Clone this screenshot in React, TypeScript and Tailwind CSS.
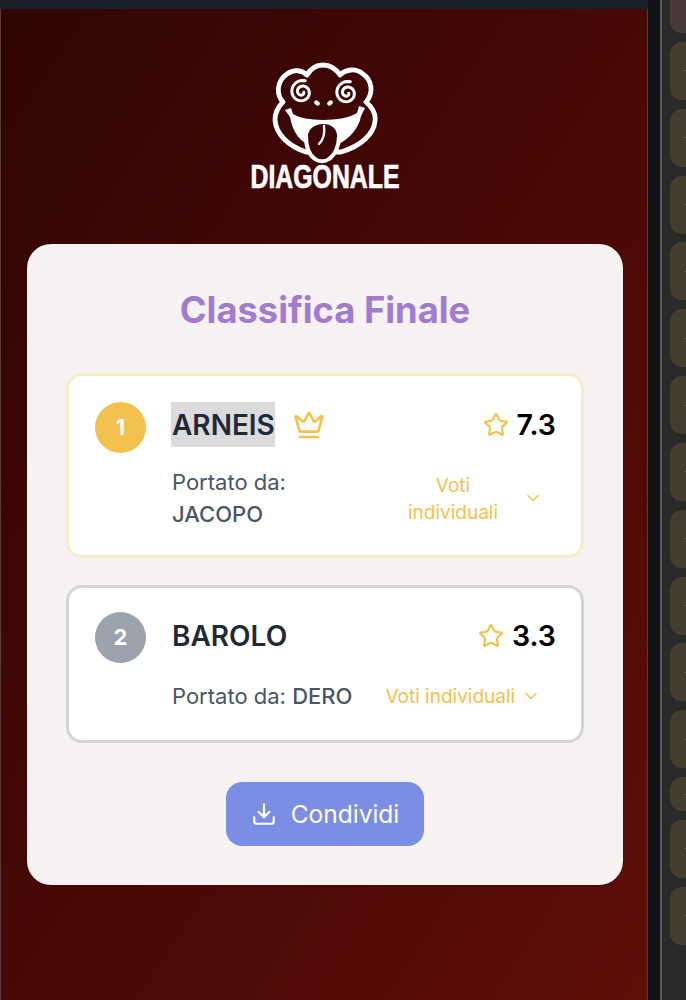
import React from 'react';
import { ChevronDown, Crown, Download, Star } from 'lucide-react';

// spirale degli occhi, calcolata come polilinea
const spiral = (cx: number, cy: number) => {
  const pts: string[] = [];
  for (let t = 0; t <= 1; t += 0.02) {
    const a = t * Math.PI * 3.6 + 0.2;
    const r = 1.8 + t * 10.2;
    pts.push(`${(cx + Math.cos(a) * r).toFixed(2)},${(cy + Math.sin(a) * r).toFixed(2)}`);
  }
  return pts.join(' ');
};

const Logo = () => (
  <svg width="106" height="104" viewBox="0 0 106 104" fill="none" className="block">
    {/* testa */}
    <path
      d="M35 13C39 6 45 3 51 3C58 3 64 7 68 13C74 7 84 6 91 12C100 18 102 31 94 40C101 46 104 52 103 59C102 72 89 84 69 90L34 90C16 84 4 72 3 58C3 52 5 46 11 40C3 31 6 18 15 12C22 7 30 8 35 13Z"
      stroke="white"
      strokeWidth="4.8"
      strokeLinejoin="round"
    />
    {/* occhi */}
    <polyline points={spiral(30, 30)} stroke="white" strokeWidth="3" strokeLinecap="round" />
    <polyline points={spiral(75, 31)} stroke="white" strokeWidth="3" strokeLinecap="round" />
    {/* naso */}
    <ellipse cx="45" cy="41" rx="3" ry="2.2" fill="white" transform="rotate(35 45 41)" />
    <ellipse cx="58" cy="41" rx="3" ry="2.2" fill="white" transform="rotate(-35 58 41)" />
    {/* bocca */}
    <path
      d="M13 48L19 46L21 52C32 60 72 60 85 51L87 44L93 46L89 54C87 66 78 76 67 82L35 82C25 77 20 66 18 55Z"
      fill="white"
    />
    {/* lingua */}
    <path
      d="M34 74C34 66 42 60 51 60C61 60 67 66 67 74C67 84 63 93 57 97C53 100 47 100 43 97C37 93 34 84 34 74Z"
      fill="#3b0805"
      stroke="white"
      strokeWidth="4"
    />
    <path d="M52 64C53 71 51 78 47 82" stroke="white" strokeWidth="2.4" strokeLinecap="round" />
  </svg>
);

// altezze delle righe nel pannello laterale
const tiles = [58, 58, 58, 58, 58, 58, 58, 58, 58, 58, 58, 34, 58, 58];

const App = () => {
  return (
    <div className="flex h-[1000px] w-[686px] overflow-hidden bg-[#111317] font-['Inter',sans-serif]">
      {/* colonna principale */}
      <div className="flex w-[648px] flex-col">
        <div className="h-[9px] shrink-0 bg-[#1a202a]" />
        <div className="flex flex-1 flex-col items-center border-x border-[#5a3a3a] bg-gradient-to-br from-[#300504] to-[#5f0e09] pr-[24px] pl-[26px]">
          <div className="mt-[53px] flex flex-col items-center">
            <Logo />
            <div className="mt-[-7px] scale-x-[0.73] font-['Liberation_Sans',sans-serif] text-[34px] leading-[34px] font-bold text-white [-webkit-text-stroke:0.7px_white]">
              DIAGONALE
            </div>
          </div>

          <div className="mt-[51px] flex h-[641px] w-[596px] flex-col items-center rounded-3xl bg-[#f5f2f1] px-[39px] shadow-sm">
            <h1 className="mt-[44px] text-[36.3px] leading-[44px] font-bold text-[#a07bd0]">
              Classifica Finale
            </h1>

            <div className="mt-[41px] flex h-[185px] w-full flex-col rounded-2xl border-[3px] border-[#f9ecc9] bg-white pt-[26px] pr-[25px] pl-[26px]">
              <div className="flex items-start">
                <div className="flex h-[51px] w-[51px] shrink-0 items-center justify-center rounded-full bg-[#f2c14e] text-[22px] font-bold text-white">
                  1
                </div>
                <div className="ml-[25px] flex h-[45px] items-center bg-[#dbdbdb] pl-px text-[28px] font-semibold text-[#1f2937]">
                  ARNEIS
                </div>
                <Crown size={32} strokeWidth={2} className="mt-[7px] ml-[18px] text-[#f2c14e]" />
                <div className="mt-[7px] ml-auto flex items-center gap-2">
                  <Star size={26} strokeWidth={2} className="text-[#f2c14e]" />
                  <span className="text-[28.5px] leading-8 font-semibold text-black">7.3</span>
                </div>
              </div>
              <div className="mt-[13px] ml-[77px] flex items-center">
                <div className="w-[120px] text-[22px] leading-8 text-[#4b5563]">
                  Portato da:
                  <div className="font-medium">JACOPO</div>
                </div>
                <div className="ml-[101px] w-[120px] pt-px text-center text-[19px] leading-[27px] text-[#f2c14e]">
                  Voti individuali
                </div>
                <ChevronDown size={20} strokeWidth={1.75} className="ml-[10px] text-[#f2c14e]" />
              </div>
            </div>

            <div className="mt-[27px] flex h-[158px] w-full flex-col rounded-2xl border-[3px] border-[#d1d5db] bg-white pt-[24px] pr-[25px] pl-[26px]">
              <div className="flex items-start">
                <div className="flex h-[51px] w-[51px] shrink-0 items-center justify-center rounded-full bg-[#9ca3af] text-[22px] font-bold text-white">
                  2
                </div>
                <div className="mt-2 ml-[26px] text-[28px] leading-8 font-semibold text-[#1f2937]">BAROLO</div>
                <div className="mt-2 ml-auto flex items-center gap-2">
                  <Star size={26} strokeWidth={2} className="text-[#f2c14e]" />
                  <span className="text-[28.5px] leading-8 font-semibold text-black">3.3</span>
                </div>
              </div>
              <div className="mt-[17px] ml-[77px] flex items-center">
                <div className="text-[22px] leading-8 text-[#4b5563]">
                  Portato da: <span className="font-medium">DERO</span>
                </div>
                <div className="ml-[33px] text-[19px] leading-[27px] text-[#f2c14e]">Voti individuali</div>
                <ChevronDown size={20} strokeWidth={1.75} className="ml-[6px] text-[#f2c14e]" />
              </div>
            </div>

            <button className="mt-[39px] flex h-16 w-[198px] items-center justify-center gap-[14px] rounded-2xl bg-[#7b8ee3] text-[24.5px] text-white">
              <Download size={26} strokeWidth={2} />
              Condividi
            </button>
          </div>
        </div>
      </div>

      {/* pannello laterale */}
      <div className="ml-[12px] flex flex-1 border-l-2 border-[#5c5c5c] bg-[#2a2a2a] pl-2">
        <div className="mt-[-25px] flex w-full flex-col gap-[8.85px]">
          <div className="h-[58px] shrink-0 rounded-l-xl bg-[#4b3a3a]" />
          {tiles.map((h, i) => (
            <div
              key={i}
              className={`flex shrink-0 items-center justify-end rounded-l-xl bg-[#433e2d] ${h === 34 ? 'h-[34px]' : 'h-[58px]'}`}
            >
              <div className="h-px w-px bg-[#8a7458]" />
            </div>
          ))}
        </div>
      </div>
    </div>
  );
};

export default App;
